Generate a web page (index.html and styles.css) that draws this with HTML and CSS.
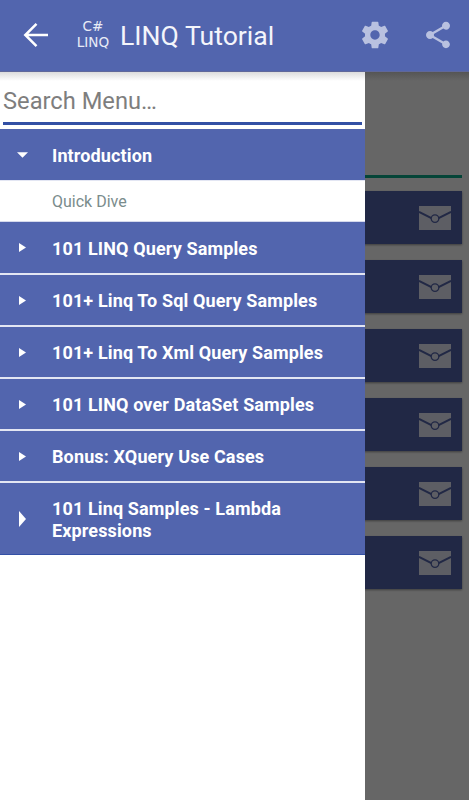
FILE: index.html
```html
<!DOCTYPE html>
<html lang="en">
<head>
    <meta charset="UTF-8">
    <meta name="viewport" content="width=device-width, initial-scale=1.0">
    <title>LINQ Tutorial</title>
    <link rel="stylesheet" href="styles.css">
</head>
<body>

    <!-- Top bar -->
    <header class="toolbar">
        <svg class="back" viewBox="0 0 26 26"><path d="M25 13H2M13.5 1.8L2.3 13l11.2 11.2"/></svg>
        <div class="logo"><span>C#</span><span>LINQ</span></div>
        <h1>LINQ Tutorial</h1>
        <svg class="action" viewBox="0 0 24 24"><path d="M19.43 12.98c.04-.32.07-.64.07-.98s-.03-.66-.07-.98l2.11-1.65c.19-.15.24-.42.12-.64l-2-3.46c-.12-.22-.39-.3-.61-.22l-2.49 1c-.52-.4-1.08-.73-1.69-.98l-.38-2.65C14.46 2.18 14.25 2 14 2h-4c-.25 0-.46.18-.49.42l-.38 2.65c-.61.25-1.17.59-1.69.98l-2.49-1c-.23-.09-.49 0-.61.22l-2 3.46c-.13.22-.07.49.12.64l2.11 1.65c-.04.32-.07.65-.07.98s.03.66.07.98l-2.11 1.65c-.19.15-.24.42-.12.64l2 3.46c.12.22.39.3.61.22l2.49-1c.52.4 1.08.73 1.69.98l.38 2.65c.03.24.24.42.49.42h4c.25 0 .46-.18.49-.42l.38-2.65c.61-.25 1.17-.59 1.69-.98l2.49 1c.23.09.49 0 .61-.22l2-3.46c.12-.22.07-.49-.12-.64l-2.11-1.65zM12 15.5c-1.93 0-3.5-1.57-3.5-3.5s1.57-3.5 3.5-3.5 3.5 1.57 3.5 3.5-1.57 3.5-3.5 3.5z"/></svg>
        <svg class="action" viewBox="0 0 24 24"><path d="M18 16.08c-.76 0-1.44.3-1.96.77L8.91 12.7c.05-.23.09-.46.09-.7s-.04-.47-.09-.7l7.05-4.11c.54.5 1.25.81 2.04.81 1.66 0 3-1.34 3-3s-1.34-3-3-3-3 1.34-3 3c0 .24.04.47.09.7L8.04 9.81C7.5 9.31 6.79 9 6 9c-1.66 0-3 1.34-3 3s1.34 3 3 3c.79 0 1.5-.31 2.04-.81l7.12 4.16c-.05.21-.08.43-.08.65 0 1.61 1.31 2.92 2.92 2.92s2.92-1.31 2.92-2.92-1.31-2.92-2.92-2.92z"/></svg>
    </header>

    <svg class="defs">
        <symbol id="mail" viewBox="0 0 32 24">
            <rect class="paper" width="32" height="24"/>
            <path class="fold" d="M0 5.8l12.4 6.4M32 5.8l-12.4 6.4"/>
            <circle class="seal" cx="16" cy="12.6" r="3.8"/>
        </symbol>
    </svg>

    <div class="screen">
        <!-- Dimmed page behind the drawer -->
        <main class="page">
            <div class="rule"></div>
            <div class="card"><svg><use href="#mail"/></svg></div>
            <div class="card"><svg><use href="#mail"/></svg></div>
            <div class="card"><svg><use href="#mail"/></svg></div>
            <div class="card"><svg><use href="#mail"/></svg></div>
            <div class="card"><svg><use href="#mail"/></svg></div>
            <div class="card"><svg><use href="#mail"/></svg></div>
        </main>

        <!-- Drawer menu -->
        <nav class="drawer">
            <input class="search" type="text" placeholder="Search Menu…">
            <div class="group open">
                <svg class="arrow" viewBox="0 0 12 6"><path d="M0 0h12L6 6z"/></svg>
                <span>Introduction</span>
            </div>
            <div class="item">Quick Dive</div>
            <div class="group">
                <svg class="arrow" viewBox="0 0 7 9"><path d="M0 0l7 4.5L0 9z"/></svg>
                <span>101 LINQ Query Samples</span>
            </div>
            <div class="group">
                <svg class="arrow" viewBox="0 0 7 9"><path d="M0 0l7 4.5L0 9z"/></svg>
                <span>101+ Linq To Sql Query Samples</span>
            </div>
            <div class="group">
                <svg class="arrow" viewBox="0 0 7 9"><path d="M0 0l7 4.5L0 9z"/></svg>
                <span>101+ Linq To Xml Query Samples</span>
            </div>
            <div class="group">
                <svg class="arrow" viewBox="0 0 7 9"><path d="M0 0l7 4.5L0 9z"/></svg>
                <span>101 LINQ over DataSet Samples</span>
            </div>
            <div class="group">
                <svg class="arrow" viewBox="0 0 7 9"><path d="M0 0l7 4.5L0 9z"/></svg>
                <span>Bonus: XQuery Use Cases</span>
            </div>
            <div class="group tall">
                <svg class="arrow" viewBox="0 0 7 16"><path d="M0 0l7 8-7 8z"/></svg>
                <span>101 Linq Samples - Lambda Expressions</span>
            </div>
        </nav>
    </div>

</body>
</html>
```

FILE: styles.css
```css
* {
    box-sizing: border-box;
}
body {
    margin: 0;
    height: 800px;
    display: flex;
    flex-direction: column;
    overflow: hidden;
    font-family: Roboto, sans-serif;
    background: #666;
}
.defs {
    display: none;
}

/* Top bar */
.toolbar {
    height: 72px;
    flex: none;
    display: flex;
    align-items: center;
    padding: 0 15px 1px 23px;
    background: #5265ae;
    border-bottom: 1px solid #60689a;
    color: #f4f5fb;
}
.back {
    width: 26px;
    height: 26px;
    fill: none;
    stroke: #fff;
    stroke-width: 2.5;
}
.logo {
    width: 34px;
    margin: 0 10px 2px 27px;
    display: flex;
    flex-direction: column;
    align-items: center;
    font: 13.6px/16px "DejaVu Sans", sans-serif;
    color: #e8ebf6;
}
h1 {
    flex: 1;
    margin: 0;
    font-size: 26.6px;
    font-weight: 400;
    white-space: nowrap;
}
.action {
    width: 32px;
    height: 32px;
    margin-left: 31px;
    fill: #b9c1e0;
}

.screen {
    flex: 1;
    position: relative;
}

/* Dimmed page */
.page {
    height: 100%;
    padding: 102.5px 7px 0;
    background: linear-gradient(#555, #666 9px);
}
.rule {
    height: 3px;
    margin-bottom: 13px;
    background: #054538;
}
.card {
    height: 53px;
    margin: 0 0.5px 16px 0;
    padding: 1px 10.6px 0 0;
    display: flex;
    align-items: center;
    justify-content: flex-end;
    background: #212845;
    box-shadow: 0 1px 2px rgba(0, 0, 0, 0.4);
}
.card svg {
    width: 32px;
    height: 24px;
}
.paper {
    fill: #5d5e64;
}
.fold {
    stroke: #212845;
    stroke-width: 2;
}
.seal {
    fill: #5d5e64;
    stroke: #212845;
    stroke-width: 1.3;
}

/* Drawer */
.drawer {
    position: absolute;
    top: 0;
    left: 0;
    width: 365px;
    height: 100%;
    background: linear-gradient(#dcdcdc, #fff 9px);
}
.search {
    display: block;
    width: 359px;
    height: 53px;
    margin: 0 3px 4px;
    padding: 8px 0 0;
    border: 0;
    border-bottom: 3px solid #3350a5;
    background: none;
    font: 23.7px Roboto, sans-serif;
    outline: none;
}
.search::placeholder {
    color: #7e7e7e;
    opacity: 1;
}
.group {
    height: 52px;
    display: flex;
    align-items: center;
    padding-left: 19px;
    background: #5265ae;
    border-bottom: 2px solid #e3e6f3;
    color: #fff;
    font-size: 18px;
    font-weight: 700;
    letter-spacing: 0.13px;
    line-height: 22px;
}
.group span {
    width: 290px;
    padding-top: 2px;
}
.arrow {
    width: 7px;
    height: 9px;
    margin-right: 26px;
    fill: #fff;
}
.open {
    padding-left: 17px;
    border-bottom-width: 1px;
}
.open .arrow {
    width: 11px;
    height: 6px;
    margin-right: 24px;
}
.item {
    height: 41px;
    padding-left: 52px;
    border-bottom: 1px solid #d5d9ec;
    color: #7a8c8c;
    font-size: 16px;
    line-height: 42px;
}
.item + .group {
    height: 53px;
}
.tall {
    height: 72px;
    border-bottom: 1px solid #3350a5;
}
.tall .arrow {
    height: 16px;
}
.tall span {
    width: 260px;
}
```
